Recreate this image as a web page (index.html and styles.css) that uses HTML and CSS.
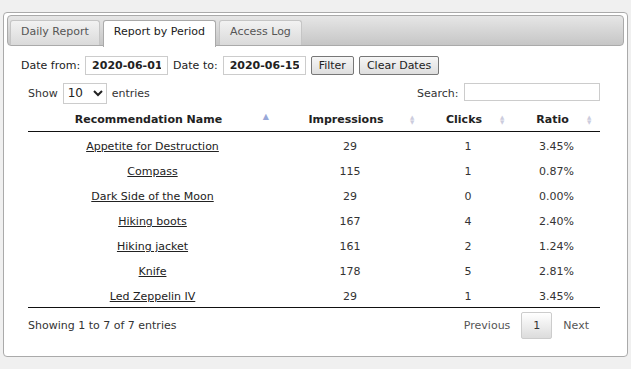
FILE: index.html
```html
<!DOCTYPE html>
<html>
<head>
  <meta charset="utf-8">
  <title>Recommendation Report</title>
  <link rel="stylesheet" href="styles.css">
</head>
<body>
<div class="panel">
  <ul class="tabs">
    <li class="tab">Daily Report</li>
    <li class="tab active">Report by Period</li>
    <li class="tab">Access Log</li>
  </ul>
  <div class="tab-body">
    <div class="dates">
      <label>Date from:</label>
      <input type="text" class="date" value="2020-06-01">
      <label>Date to:</label>
      <input type="text" class="date" value="2020-06-15">
      <button class="btn">Filter</button>
      <button class="btn">Clear Dates</button>
    </div>
    <div class="table-wrap">
      <div class="table-top">
        <div class="length">Show
          <select><option>10</option></select>
          entries</div>
        <div class="search">Search: <input type="text"></div>
      </div>
      <table class="report">
        <thead>
          <tr>
            <th class="col-name sort-asc">Recommendation Name</th>
            <th class="col-imp sortable">Impressions</th>
            <th class="col-clicks sortable">Clicks</th>
            <th class="col-ratio sortable">Ratio</th>
          </tr>
        </thead>
        <tbody>
          <tr><td><a href="#">Appetite for Destruction</a></td><td>29</td><td>1</td><td>3.45%</td></tr>
          <tr><td><a href="#">Compass</a></td><td>115</td><td>1</td><td>0.87%</td></tr>
          <tr><td><a href="#">Dark Side of the Moon</a></td><td>29</td><td>0</td><td>0.00%</td></tr>
          <tr><td><a href="#">Hiking boots</a></td><td>167</td><td>4</td><td>2.40%</td></tr>
          <tr><td><a href="#">Hiking jacket</a></td><td>161</td><td>2</td><td>1.24%</td></tr>
          <tr><td><a href="#">Knife</a></td><td>178</td><td>5</td><td>2.81%</td></tr>
          <tr><td><a href="#">Led Zeppelin IV</a></td><td>29</td><td>1</td><td>3.45%</td></tr>
        </tbody>
      </table>
      <div class="table-bottom">
        <div class="info">Showing 1 to 7 of 7 entries</div>
        <div class="paging">
          <span class="page-link">Previous</span>
          <span class="page-link current">1</span>
          <span class="page-link">Next</span>
        </div>
      </div>
    </div>
  </div>
</div>
</body>
</html>
```

FILE: styles.css
```css
/* page */
body {
  margin: 0;
  padding: 12px 3px 0 3px;
  background: #f0f0f0;
  font-family: "DejaVu Sans", Verdana, sans-serif;
  font-size: 11px;
  color: #333;
}
.panel {
  background: #fff;
  border: 1px solid #aaa;
  border-radius: 4px;
  padding: 2px 3px;
  height: 339px;
}

/* tabs */
.tabs {
  list-style: none;
  margin: 0;
  padding: 4px 0 0 2px;
  height: 25px;
  display: flex;
  gap: 3px;
  border: 1px solid #aaa;
  border-radius: 4px;
  background: linear-gradient(#e6e6e6, #c6c6c6);
}
.tab {
  padding: 4px 10px 0;
  color: #555;
  background: linear-gradient(#f2f2f2, #dadada);
  border: 1px solid #c5c5c5;
  border-bottom: none;
  border-radius: 3px 3px 0 0;
}
.tab.active {
  background: #fff;
  color: #212121;
  border-color: #aaa;
  height: 22px;
}

/* date filter */
.tab-body {
  padding: 10px 14px 0 14px;
}
.dates {
  display: flex;
  align-items: center;
  gap: 5px;
  color: #222;
}
.date {
  width: 69px;
  height: 17px;
  padding: 0 6px;
  border: 1px solid #ccc;
  font: bold 11px "DejaVu Sans", sans-serif;
  color: #222;
  margin: 0;
}
.btn {
  height: 19px;
  padding: 0 7px;
  font: 11px "DejaVu Sans", sans-serif;
  color: #222;
  background: linear-gradient(#f6f6f6, #dedede);
  border: 1px solid #777;
  border-radius: 2px;
}

/* table */
.table-wrap {
  margin: 0 10px 0 7px;
}
.table-top {
  display: flex;
  justify-content: space-between;
  align-items: center;
  margin-top: 8px;
  height: 20px;
}
.length {
  display: flex;
  align-items: center;
  gap: 5px;
}
.length select {
  width: 44px;
  height: 21px;
  font: 12px "DejaVu Sans", sans-serif;
  border: 1px solid #ccc;
  background: #fff;
  color: #222;
}
.search input {
  width: 130px;
  height: 14px;
  border: 1px solid #ccc;
  margin: 0 0 2px 2px;
}
.report {
  width: 100%;
  border-collapse: collapse;
  margin-top: 4px;
}
.report th {
  font-weight: bold;
  color: #222;
  height: 17px;
  padding: 4px 18px 3px 10px;
  border-bottom: 1px solid #111;
  position: relative;
  text-align: center;
}
.col-name { width: 221px; }
.col-imp { width: 118px; }
.col-clicks { width: 62px; }
.sort-asc::after,
.sortable::after {
  position: absolute;
  right: 8px;
  top: 6px;
  font-size: 8px;
  line-height: 7px;
  color: #ccd;
}
.sortable::after {
  content: "\25B2\A\25BC";
  white-space: pre;
  transform: scale(0.7);
}
.sort-asc::after {
  content: "\25B2";
  color: #99a8d8;
}
.report td {
  text-align: center;
  height: 17px;
  padding: 6px 10px 2px;
}
.report a {
  color: #222;
}
.table-bottom {
  border-top: 1px solid #111;
  display: flex;
  justify-content: space-between;
  align-items: center;
  padding-top: 4px;
}
.paging {
  display: flex;
  align-items: center;
}
.page-link {
  padding: 6px 11px;
  color: #555;
}
.page-link.current {
  color: #333;
  border: 1px solid #ccc;
  background: linear-gradient(#fff, #dcdcdc);
  border-radius: 2px;
}
```
